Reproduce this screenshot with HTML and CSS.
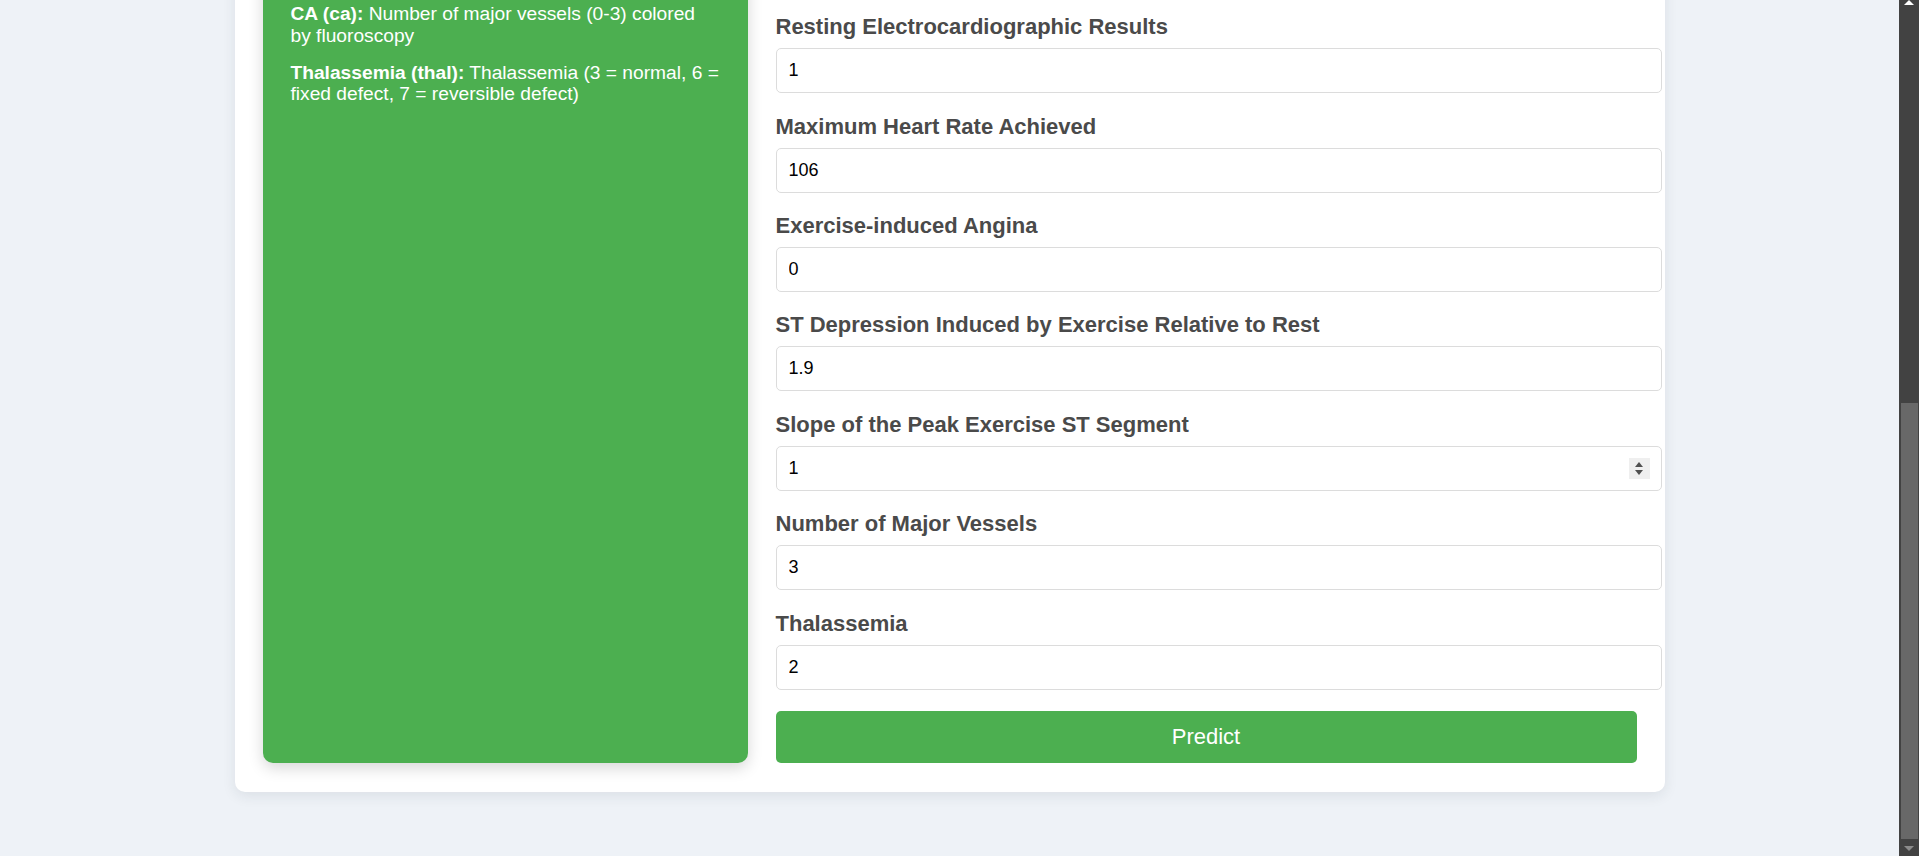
FILE: index.html
```html
<!DOCTYPE html>
<html lang="en">
<head>
<meta charset="utf-8">
<title>Heart Disease Prediction</title>
<link rel="stylesheet" href="styles.css">
</head>
<body>
<div class="screen">
  <main class="viewport">
    <div class="card">
      <aside class="info">
        <p><b>Slope (slope):</b> The slope of the peak exercise ST segment</p>
        <p><b>CA (ca):</b> Number of major vessels (0-3) colored by fluoroscopy</p>
        <p><b>Thalassemia (thal):</b> Thalassemia (3 = normal, 6 = fixed defect, 7 = reversible defect)</p>
      </aside>
      <form class="form">
        <div class="group">
          <label class="label" for="fbs">Fasting Blood Sugar</label>
          <input class="input" id="fbs" type="number" value="0">
        </div>
        <div class="group">
          <label class="label" for="restecg">Resting Electrocardiographic Results</label>
          <input class="input" id="restecg" type="number" value="1">
        </div>
        <div class="group">
          <label class="label" for="thalach">Maximum Heart Rate Achieved</label>
          <input class="input" id="thalach" type="number" value="106">
        </div>
        <div class="group">
          <label class="label" for="exang">Exercise-induced Angina</label>
          <input class="input" id="exang" type="number" value="0">
        </div>
        <div class="group">
          <label class="label" for="oldpeak">ST Depression Induced by Exercise Relative to Rest</label>
          <input class="input" id="oldpeak" type="number" value="1.9">
        </div>
        <div class="group">
          <label class="label" for="slope">Slope of the Peak Exercise ST Segment</label>
          <div class="field">
            <input class="input" id="slope" type="number" value="1">
            <span class="spin" aria-hidden="true"><i class="spin-up"></i><i class="spin-down"></i></span>
          </div>
        </div>
        <div class="group">
          <label class="label" for="ca">Number of Major Vessels</label>
          <input class="input" id="ca" type="number" value="3">
        </div>
        <div class="group">
          <label class="label" for="thal">Thalassemia</label>
          <input class="input" id="thal" type="number" value="2">
        </div>
        <button class="btn" type="button">Predict</button>
      </form>
    </div>
  </main>
  <div class="scrollbar" aria-hidden="true">
    <span class="sb-btn sb-up"></span>
    <div class="sb-track"><span class="sb-thumb"></span></div>
    <span class="sb-btn sb-down"></span>
  </div>
</div>
</body>
</html>
```
FILE: styles.css
```css
html, body {
  margin: 0;
  height: 100%;
}

body {
  background: #eef2f7;
  font-family: "Liberation Sans", Arial, sans-serif;
  overflow: hidden;
}

.screen {
  display: flex;
  height: 100vh;
}

.viewport {
  flex: 1;
  min-width: 0;
  display: flex;
  flex-direction: column;
  justify-content: flex-end;
  overflow: hidden;
  padding-bottom: 64px;
}

.card {
  flex-shrink: 0;
  box-sizing: border-box;
  width: 1430px;
  margin: 0 auto;
  padding: 28px 28px 29px;
  background: #ffffff;
  border-radius: 10px;
  box-shadow: 0 4px 14px rgba(30, 40, 60, 0.09);
  display: grid;
  grid-template-columns: 485px 1fr;
  column-gap: 28px;
}

.info {
  background: #4caf50;
  color: #ffffff;
  border-radius: 10px;
  padding: 30px 27px 28px 28px;
  box-shadow: 0 5px 15px rgba(0, 0, 0, 0.16);
  font-size: 19.2px;
  line-height: 1.12;
}

.info p {
  margin: 0 0 15.5px;
}

.form {
  display: flex;
  flex-direction: column;
  min-width: 0;
}

.group {
  margin-bottom: 20.4px;
}

.label {
  display: block;
  margin-bottom: 8px;
  font-size: 22px;
  font-weight: bold;
  color: #4a4a4a;
}

.field {
  position: relative;
}

.input {
  display: block;
  width: 100%;
  box-sizing: content-box;
  margin: 0;
  padding: 11px 11px 11px 12px;
  border: 1px solid #dcdcdc;
  border-radius: 5px;
  font-family: "Liberation Sans", Arial, sans-serif;
  font-size: 18px;
  color: #000000;
  background: #ffffff;
  outline: none;
  -moz-appearance: textfield;
}

.input::-webkit-inner-spin-button,
.input::-webkit-outer-spin-button {
  -webkit-appearance: none;
  margin: 0;
}

.spin {
  position: absolute;
  top: 12px;
  right: -13px;
  width: 21px;
  height: 21px;
  background: #efefef;
  display: flex;
  flex-direction: column;
  align-items: center;
  justify-content: center;
  gap: 3px;
}

.spin-up,
.spin-down {
  display: block;
  width: 0;
  height: 0;
  border-left: 4.5px solid transparent;
  border-right: 4.5px solid transparent;
}

.spin-up {
  border-bottom: 5px solid #505050;
}

.spin-down {
  border-top: 5px solid #505050;
}

.btn {
  display: block;
  width: 100%;
  height: 52px;
  margin: 1px 0 0;
  border: none;
  border-radius: 5px;
  background: #4caf50;
  color: #ffffff;
  font-family: "Liberation Sans", Arial, sans-serif;
  font-size: 22px;
}

.scrollbar {
  flex: 0 0 20px;
  display: flex;
  flex-direction: column;
  background: #424242;
}

.sb-btn {
  flex: 0 0 17px;
  display: flex;
  justify-content: center;
}

.sb-up::before {
  content: "";
  border-left: 5px solid transparent;
  border-right: 5px solid transparent;
  border-bottom: 5px solid #ffffff;
  height: 0;
}

.sb-down::before {
  content: "";
  margin-top: 7px;
  border-left: 5px solid transparent;
  border-right: 5px solid transparent;
  border-top: 5px solid #8c8c8c;
  height: 0;
}

.sb-track {
  flex: 1;
  display: flex;
  flex-direction: column;
  justify-content: flex-end;
  padding: 0 1px 0 2px;
}

.sb-thumb {
  height: 436px;
  background: #686868;
}
```
